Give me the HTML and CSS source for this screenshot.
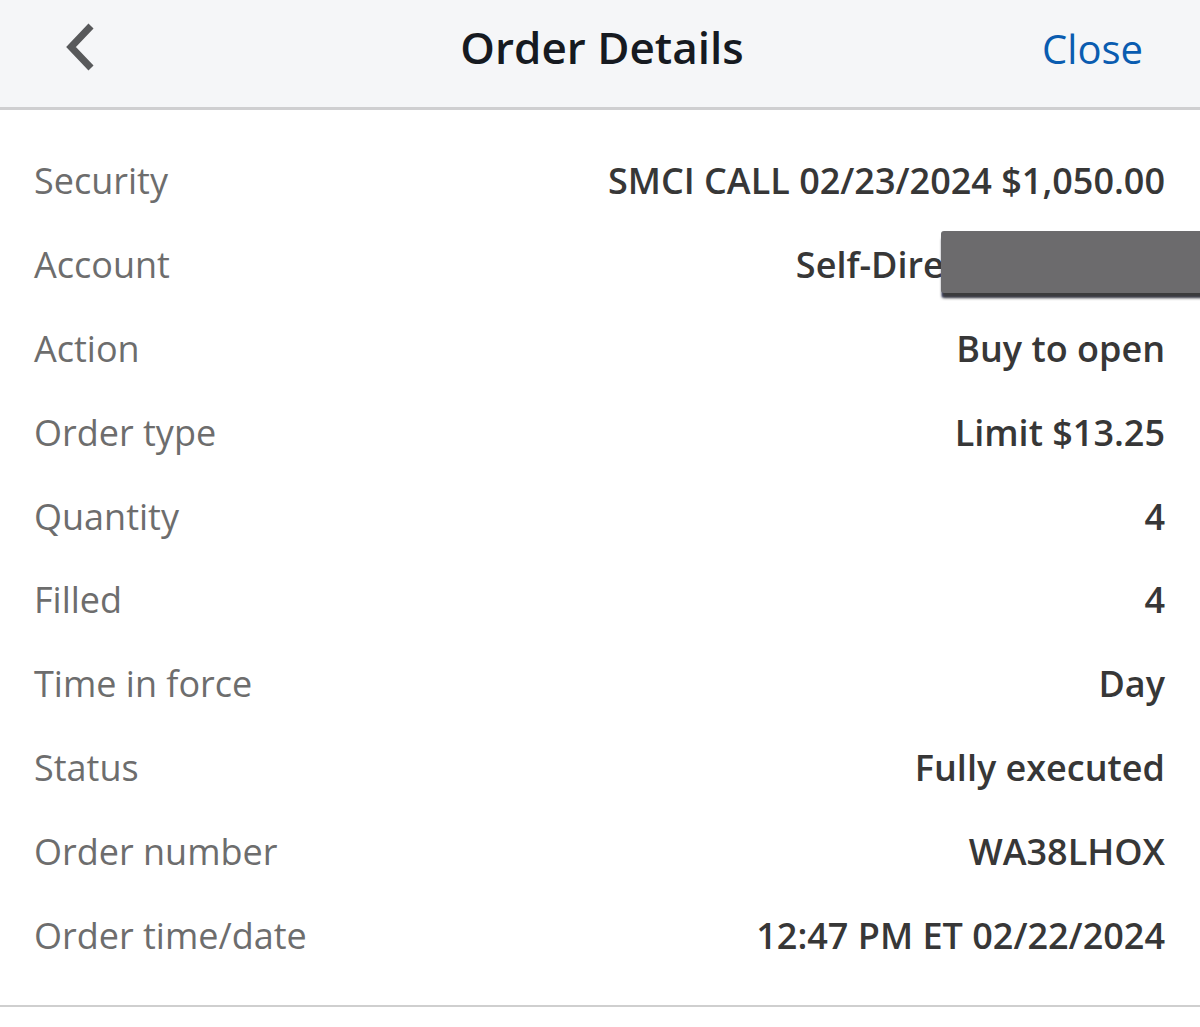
FILE: index.html
```html
<!DOCTYPE html>
<html>
<head>
<meta charset="utf-8">
<link rel="stylesheet" href="styles.css">
</head>
<body>
<div class="screen">
  <header class="topbar">
    <div class="back">
      <svg width="40" height="50" viewBox="0 0 40 50"><polyline points="30,3 10,24 30,45" fill="none" stroke="#58595b" stroke-width="7" stroke-linecap="butt" stroke-linejoin="miter"/></svg>
    </div>
    <h1 class="title">Order Details</h1>
    <div class="close">Close</div>
  </header>
  <main class="details">
    <div class="row"><span class="label">Security</span><span class="value">SMCI CALL 02/23/2024 $1,050.00</span></div>
    <div class="row account-row"><span class="label">Account</span><span class="value account">Self-Directed</span><span class="redact"></span></div>
    <div class="row"><span class="label">Action</span><span class="value">Buy to open</span></div>
    <div class="row"><span class="label">Order type</span><span class="value">Limit $13.25</span></div>
    <div class="row"><span class="label">Quantity</span><span class="value">4</span></div>
    <div class="row"><span class="label">Filled</span><span class="value">4</span></div>
    <div class="row"><span class="label">Time in force</span><span class="value">Day</span></div>
    <div class="row"><span class="label">Status</span><span class="value">Fully executed</span></div>
    <div class="row"><span class="label">Order number</span><span class="value">WA38LHOX</span></div>
    <div class="row"><span class="label">Order time/date</span><span class="value">12:47 PM ET 02/22/2024</span></div>
  </main>
</div>
</body>
</html>
```
FILE: styles.css
```css
* { box-sizing: border-box; }
html, body { margin: 0; padding: 0; background: #fff; }
body { font-family: "Open Sans", "Noto Sans", sans-serif; overflow: hidden; }
.screen { width: 1200px; height: 1027px; position: relative; overflow: hidden; }
.topbar {
  height: 110px;
  background: #f5f6f8;
  border-bottom: 3px solid #cfcfd1;
  display: grid;
  grid-template-columns: 1fr auto 1fr;
  align-items: center;
  padding: 0 57px 0 61px;
}
.back { display: flex; align-items: center; margin-top: -12px; }
.title {
  margin: 0;
  font-size: 44px;
  font-weight: 600;
  color: #161a21;
  margin-top: -14px;
}
.close {
  justify-self: end;
  font-size: 40px;
  color: #0a5cb0;
  font-weight: 500;
  margin-top: -10px;
}
.details {
  padding: 29px 35px 28px 34px;
  border-bottom: 2px solid #cfcfcf;
}
.row {
  height: 83.8px;
  display: flex;
  align-items: center;
  justify-content: space-between;
}
.label { font-size: 36px; color: #6d6d6d; }
.value { font-size: 36px; font-weight: 600; color: #373737; }
.account-row { position: relative; }
.account { margin-left: auto; margin-right: 146px; }
.redact {
  position: absolute;
  left: 907px;
  right: -40px;
  top: 8px;
  height: 62px;
  background: #6c6b6d;
  border-radius: 3px 0 0 3px;
  box-shadow: 0 6px 3px -1px #3b3b3c, -1px 6px 2px -2px #4a55a0;
}
```
